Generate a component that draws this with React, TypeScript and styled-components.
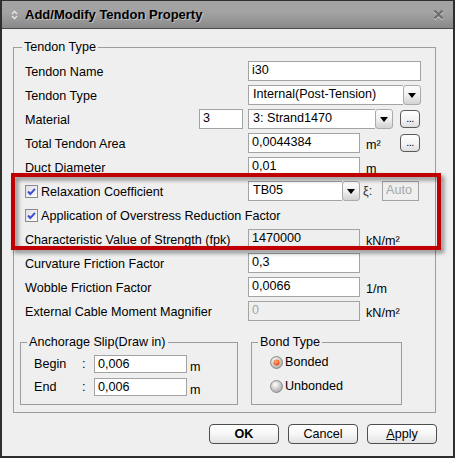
import React from 'react';
import styled, { createGlobalStyle } from 'styled-components';

const GlobalStyle = createGlobalStyle`
  html, body {
    margin: 0;
    padding: 0;
    background: #efefef;
  }
  body {
    font-family: "Liberation Sans", Arial, sans-serif;
    font-size: 12.6px;
    color: #000;
  }
`;

const Window = styled.div`
  position: relative;
  box-sizing: border-box;
  width: 455px;
  height: 458px;
  background: #efefef;
  border: 2px solid #2e2e2e;
  border-top-width: 1px;
`;

const TitleBar = styled.div`
  height: 27px;
  display: flex;
  align-items: center;
  padding: 0 9px;
  background: linear-gradient(#a4a4a4, #a2a2a2 45%, #898989);
  border-bottom: 1px solid #4a4a4a;
`;

const Title = styled.span`
  flex: 1;
  margin-left: 7px;
  font: bold 13px "Liberation Sans", Arial, sans-serif;
  color: #000;
  text-shadow: 1px 1px 0 rgba(255, 255, 255, 0.4);
`;

const Body = styled.div`
  padding: 18px 17px 0 11px;
`;

const GroupBox = styled.div<{ $w?: number; $h?: number }>`
  position: relative;
  box-sizing: border-box;
  border: 1px solid #9c9c9c;
  ${p => (p.$w ? `width: ${p.$w}px;` : '')}
  ${p => (p.$h ? `height: ${p.$h}px;` : '')}
`;

const OuterGroup = styled(GroupBox)`
  padding: 13px 0 7px 6px;
`;

const Legend = styled.span<{ $left: number }>`
  position: absolute;
  top: -8px;
  left: ${p => p.$left}px;
  padding: 0 2px;
  line-height: 14px;
  background: #efefef;
  white-space: nowrap;
`;

const Rows = styled.div`
  display: flex;
  flex-direction: column;
  gap: 4px;
  margin-left: 5px;
`;

const Row = styled.div`
  display: flex;
  align-items: center;
  height: 20px;
`;

const Label = styled.span<{ $w?: number }>`
  flex: 0 0 ${p => p.$w ?? 223}px;
  display: flex;
  align-items: center;
  gap: 3px;
  white-space: nowrap;
  padding-top: 1px;
`;

const Field = styled.div<{ $w: number; $h?: number; $disabled?: boolean; $muted?: boolean; $ml?: number }>`
  box-sizing: border-box;
  flex: 0 0 ${p => p.$w}px;
  width: ${p => p.$w}px;
  height: ${p => p.$h ?? 20}px;
  margin-left: ${p => p.$ml ?? 0}px;
  border: 1px solid #a3a3a3;
  background: ${p => (p.$disabled ? '#efefef' : '#fff')};
  color: ${p => (p.$muted ? '#a6a6a6' : '#000')};
  padding: 1px 3px 0;
  line-height: 14px;
  white-space: nowrap;
  overflow: hidden;
`;

const SelectBox = styled.div<{ $w: number; $ml?: number }>`
  flex: 0 0 ${p => p.$w}px;
  height: 20px;
  margin-left: ${p => p.$ml ?? 0}px;
  display: flex;
`;

const SelectText = styled.div`
  flex: 1;
  box-sizing: border-box;
  border: 1px solid #a3a3a3;
  border-right: none;
  background: #fff;
  padding: 1px 4px 0;
  line-height: 15px;
  white-space: nowrap;
  overflow: hidden;
`;

const ArrowButton = styled.div`
  flex: 0 0 18px;
  box-sizing: border-box;
  border: 1px solid #aaaaaa;
  border-radius: 3px;
  background: linear-gradient(#fdfdfd, #f0f0f0 50%, #d2d2d2);
  display: flex;
  align-items: center;
  justify-content: center;
`;

const Unit = styled.span<{ $w?: number }>`
  flex: 0 0 ${p => p.$w ?? 34}px;
  margin-left: 6px;
  padding-top: 4px;
  white-space: nowrap;
`;

const EllipsisButton = styled.div<{ $ml?: number }>`
  box-sizing: border-box;
  width: 20px;
  height: 18px;
  margin-left: ${p => p.$ml ?? 0}px;
  border: 1px solid #5a5a5a;
  border-radius: 4px;
  background: linear-gradient(#ffffff, #f3f3f3 55%, #dedede);
  font-size: 11px;
  line-height: 15px;
  text-align: center;
  letter-spacing: -0.5px;
`;

const Xi = styled.span`
  flex: 0 0 19px;
  margin-left: 3px;
  color: #333;
`;

const SubGroups = styled.div`
  display: flex;
  gap: 13px;
  margin-top: 21px;
`;

const SlipGroup = styled(GroupBox)`
  padding: 12px 0 0 13px;
  display: flex;
  flex-direction: column;
  gap: 5px;
`;

const SlipRow = styled.div`
  display: flex;
  align-items: center;
  height: 18px;
`;

const SlipLabel = styled.span<{ $w: number }>`
  flex: 0 0 ${p => p.$w}px;
`;

const SlipUnit = styled.span`
  align-self: flex-start;
  margin: 5px 0 0 3px;
  line-height: 14px;
`;

const BondGroup = styled(GroupBox)`
  padding: 9px 0 0 18px;
  display: flex;
  flex-direction: column;
  gap: 4px;
`;

const RadioRow = styled.div`
  display: flex;
  align-items: center;
  gap: 2px;
  height: 20px;
`;

const ButtonRow = styled.div`
  display: flex;
  justify-content: flex-end;
  gap: 9px;
  margin: 11px -1px 0 0;
`;

const Button = styled.div<{ $bold?: boolean }>`
  box-sizing: border-box;
  width: 70px;
  height: 20px;
  border: 1px solid #4e4e4e;
  border-radius: 4px;
  background: linear-gradient(#ffffff, #f6f6f6 50%, #e2e2e2);
  text-align: center;
  line-height: 18px;
  font-weight: ${p => (p.$bold ? 'bold' : 'normal')};
  u {
    text-decoration: underline;
  }
`;

const Annotation = styled.div`
  position: absolute;
  left: 9px;
  top: 172px;
  width: 430px;
  height: 77px;
  box-sizing: border-box;
  border: 4px solid #c00000;
  filter: drop-shadow(3px 3px 2px rgba(0, 0, 0, 0.45));
  pointer-events: none;
`;

const TitleIcon = () => (
  <svg width="7" height="10" viewBox="0 0 7 10">
    <polyline points="1,4 3.5,1.3 6,4" fill="none" stroke="#e4e4e4" strokeWidth="1.4" />
    <polyline points="1,6 3.5,8.7 6,6" fill="none" stroke="#e4e4e4" strokeWidth="1.4" />
  </svg>
);

const CloseIcon = () => (
  <svg width="11" height="11" viewBox="0 0 11 11">
    <path d="M1.5 1.5 L9.5 9.5 M9.5 1.5 L1.5 9.5" stroke="#cfcfcf" strokeWidth="2.2" transform="translate(0 1)" />
    <path d="M1.5 1.5 L9.5 9.5 M9.5 1.5 L1.5 9.5" stroke="#6c6c6c" strokeWidth="2.2" />
  </svg>
);

const Arrow = () => (
  <svg width="8" height="5" viewBox="0 0 8 5">
    <polygon points="0,0 8,0 4,5" fill="#000" />
  </svg>
);

const CheckBox = () => (
  <svg width="13" height="13" viewBox="0 0 13 13">
    <defs>
      <linearGradient id="cbg" x1="0" y1="0" x2="1" y2="1">
        <stop offset="0" stopColor="#dcdce4" />
        <stop offset="1" stopColor="#ffffff" />
      </linearGradient>
    </defs>
    <rect x="0.5" y="0.5" width="12" height="12" fill="url(#cbg)" stroke="#8a8a8a" />
    <path d="M3 6.5 L5.3 9 L10 3.8" fill="none" stroke="#3b4fd0" strokeWidth="2" />
  </svg>
);

const Radio = ({ checked }: { checked?: boolean }) => (
  <svg width="13" height="13" viewBox="0 0 13 13">
    <defs>
      <radialGradient id={checked ? 'rOn' : 'rOff'} cx="0.4" cy="0.35" r="0.7">
        <stop offset="0" stopColor="#ffffff" />
        <stop offset="1" stopColor="#a4a4a4" />
      </radialGradient>
      <radialGradient id="rDot" cx="0.4" cy="0.35" r="0.7">
        <stop offset="0" stopColor="#ffb070" />
        <stop offset="1" stopColor="#e8400c" />
      </radialGradient>
    </defs>
    <circle cx="6.5" cy="6.5" r="6" fill={`url(#${checked ? 'rOn' : 'rOff'})`} stroke="#8c8c8c" />
    {checked && <circle cx="6.5" cy="6.5" r="3" fill="url(#rDot)" />}
  </svg>
);

const Dropdown: React.FC<{ w: number; value: string; ml?: number }> = ({ w, value, ml }) => (
  <SelectBox $w={w} $ml={ml}>
    <SelectText>{value}</SelectText>
    <ArrowButton>
      <Arrow />
    </ArrowButton>
  </SelectBox>
);

export default function App() {
  return (
    <>
      <GlobalStyle />
      <Window>
        <TitleBar>
          <TitleIcon />
          <Title>Add/Modify Tendon Property</Title>
          <CloseIcon />
        </TitleBar>
        <Body>
          <OuterGroup>
            <Legend $left={8}>Tendon Type</Legend>
            <Rows>
              <Row>
                <Label>Tendon Name</Label>
                <Field $w={173}>i30</Field>
              </Row>
              <Row>
                <Label>Tendon Type</Label>
                <Dropdown w={173} value="Internal(Post-Tension)" />
              </Row>
              <Row>
                <Label $w={174}>Material</Label>
                <Field $w={44}>3</Field>
                <Dropdown w={145} ml={5} value="3: Strand1470" />
                <EllipsisButton $ml={7}>...</EllipsisButton>
              </Row>
              <Row>
                <Label>Total Tendon Area</Label>
                <Field $w={112}>0,0044384</Field>
                <Unit>m²</Unit>
                <EllipsisButton>...</EllipsisButton>
              </Row>
              <Row>
                <Label>Duct Diameter</Label>
                <Field $w={112}>0,01</Field>
                <Unit>m</Unit>
              </Row>
              <Row>
                <Label>
                  <CheckBox />
                  Relaxation Coefficient
                </Label>
                <Dropdown w={112} value="TB05" />
                <Xi>ξ:</Xi>
                <Field $w={37} $disabled $muted>
                  Auto
                </Field>
              </Row>
              <Row>
                <Label>
                  <CheckBox />
                  Application of Overstress Reduction Factor
                </Label>
              </Row>
              <Row>
                <Label>Characteristic Value of Strength (fpk)</Label>
                <Field $w={112} $disabled>
                  1470000
                </Field>
                <Unit>kN/m²</Unit>
              </Row>
              <Row>
                <Label>Curvature Friction Factor</Label>
                <Field $w={112}>0,3</Field>
              </Row>
              <Row>
                <Label>Wobble Friction Factor</Label>
                <Field $w={112}>0,0066</Field>
                <Unit>1/m</Unit>
              </Row>
              <Row>
                <Label>External Cable Moment Magnifier</Label>
                <Field $w={112} $disabled $muted>
                  0
                </Field>
                <Unit>kN/m²</Unit>
              </Row>
            </Rows>
            <SubGroups>
              <SlipGroup $w={218} $h={63}>
                <Legend $left={6}>Anchorage Slip(Draw in)</Legend>
                <SlipRow>
                  <SlipLabel $w={48}>Begin</SlipLabel>
                  <SlipLabel $w={12}>:</SlipLabel>
                  <Field $w={93} $h={18}>
                    0,006
                  </Field>
                  <SlipUnit>m</SlipUnit>
                </SlipRow>
                <SlipRow>
                  <SlipLabel $w={48}>End</SlipLabel>
                  <SlipLabel $w={12}>:</SlipLabel>
                  <Field $w={93} $h={18}>
                    0,006
                  </Field>
                  <SlipUnit>m</SlipUnit>
                </SlipRow>
              </SlipGroup>
              <BondGroup $w={151} $h={63}>
                <Legend $left={6}>Bond Type</Legend>
                <RadioRow>
                  <Radio checked />
                  Bonded
                </RadioRow>
                <RadioRow>
                  <Radio />
                  Unbonded
                </RadioRow>
              </BondGroup>
            </SubGroups>
          </OuterGroup>
          <ButtonRow>
            <Button $bold>OK</Button>
            <Button>Cancel</Button>
            <Button>
              <u>A</u>pply
            </Button>
          </ButtonRow>
        </Body>
        <Annotation />
      </Window>
    </>
  );
}
